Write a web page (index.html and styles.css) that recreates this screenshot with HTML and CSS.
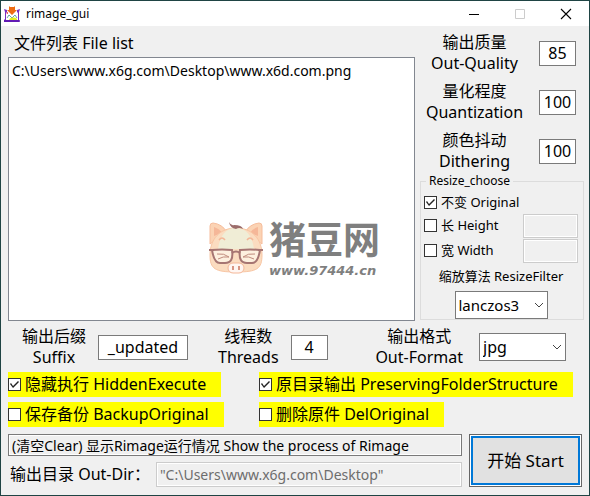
FILE: index.html
```html
<!DOCTYPE html>
<html lang="zh-CN">
<head>
<meta charset="utf-8">
<title>rimage_gui</title>
<link rel="stylesheet" href="styles.css">
</head>
<body>
<div class="window">
  <header class="titlebar">
    <svg class="app-icon" viewBox="0 0 16 16" aria-hidden="true">
      <path d="M2 4h12v11H2z" fill="#fff"/>
      <path d="M0 3l3 1v2L2 7v6h12V7l-1-1V4l3-1-1 3v10H0v-2l1-1V6z" fill="#7a2fc0"/>
      <path d="M2 7h12v7H2z" fill="#fff"/>
      <path d="M0 15h16" stroke="#5a14b0" stroke-width="1.500"/>
      <path d="M3 12l2-3 3 3 3-3 2 3" fill="none" stroke="#66a8a0"/>
      <path d="M5 14c1-3 6-3 8-1v1z" fill="#e4ef20"/>
      <path d="M2 7l2-1v2z" fill="#e8283c"/>
      <path d="M5 0l1 1h4l1-1v4h2L8 9 3 4h2z" fill="#ee6b12"/>
    </svg>
    <h1 class="title">rimage_gui</h1>
    <button class="win-btn" type="button" aria-label="Minimize"><svg viewBox="0 0 12 12"><path d="M1 6.500h10" stroke="#000"/></svg></button>
    <button class="win-btn" type="button" aria-label="Maximize" disabled><svg viewBox="0 0 12 12"><path d="M1.500 1.500h9v9h-9z" stroke="#ccc" fill="none"/></svg></button>
    <button class="win-btn" type="button" aria-label="Close"><svg viewBox="0 0 12 12"><path d="M1 1l10 10M11 1L1 11" stroke="#000" stroke-width="1.100"/></svg></button>
  </header>

  <form class="content">
    <div class="main">
      <section class="files">
        <h2 class="files-title" id="files-title">文件列表 File list</h2>
        <div class="file-list" role="listbox" aria-labelledby="files-title">
          <div class="file" role="option">C:\Users\www.x6g.com\Desktop\www.x6d.com.png</div>
          <div class="watermark">
            <svg class="pig" viewBox="0 0 54 52" aria-hidden="true">
              <path d="M1 22V4q0-3 3-3 9 1 14 9zM53 22V4q0-3-3-3-9 1-14 9z" fill="#fbd3b4" stroke="#f6bd9c"/>
              <path d="M5 14V5q6 2 8 6zM49 14V5q-6 2-8 6z" fill="#f5b798"/>
              <path d="M27 6C11 6 1 17 1 33c0 14 5 17 26 17s26-3 26-17C53 17 43 6 27 6z" fill="#fbdcc0" stroke="#f8c6a4"/>
              <path d="M27 6C16 6 11 14 9 27h36C43 14 38 6 27 6z" fill="#f0edd6"/>
              <path d="M20 0q2 4 5 3 8 0 9 4-4-2-7 0-6-1-7-7z" fill="#9c6d6b"/>
              <path d="M10 18q3-4 6 0M38 18q3-4 6 0" fill="none" stroke="#f4b798" stroke-width="1.500"/>
              <path d="M3 28q10-1 20 0 2 13-7 13h-5q-6 0-8-13zM31 28q10-1 20 0-2 13-8 13h-5q-9 0-7-13z" fill="#fdf0df" stroke="#a67572" stroke-width="2"/>
              <path d="M23 31q4-3 8 0M0 28h5M49 28h5" fill="none" stroke="#a67572" stroke-width="2"/>
              <path d="M8 32q7-1 12 3-6-1-11 2M46 32q-7-1-12 3 6-1 11 2" fill="none" stroke="#c08c7e"/>
              <rect x="19" y="41" width="16" height="10" rx="5" fill="#fff6f2" stroke="#f4b798"/>
              <path d="M24 44v4M30 44v4" stroke="#d89684" stroke-width="2"/>
            </svg>
            <div class="brand">
              <span class="brand-name">猪豆网</span>
              <span class="brand-url">www.97444.cn</span>
            </div>
          </div>
        </div>
      </section>

      <section class="settings">
        <div class="levels">
          <label for="quality">输出质量<br>Out-Quality</label><input class="num" id="quality" value="85">
          <label for="quant">量化程度<br>Quantization</label><input class="num" id="quant" value="100">
          <label for="dither">颜色抖动<br>Dithering</label><input class="num" id="dither" value="100">
        </div>
        <fieldset class="resize">
          <legend>Resize_choose</legend>
          <label class="check"><input type="checkbox" checked>不变 Original</label>
          <div class="size-row">
            <label class="check"><input type="checkbox">长 Height</label>
            <input class="size" aria-label="Height" disabled>
          </div>
          <div class="size-row">
            <label class="check"><input type="checkbox">宽 Width</label>
            <input class="size" aria-label="Width" disabled>
          </div>
          <label class="filter-label" for="filter">缩放算法 ResizeFilter</label>
          <div class="combo filter">
            <select id="filter"><option>lanczos3</option></select>
            <svg viewBox="0 0 10 6"><path d="M1 1l4 4 4-4" fill="none" stroke="#444"/></svg>
          </div>
        </fieldset>
      </section>
    </div>

    <div class="output">
      <div class="field">
        <label for="suffix">输出后缀<br>Suffix</label><input class="suffix" id="suffix" value="_updated">
      </div>
      <div class="field">
        <label for="threads">线程数<br>Threads</label><input class="num" id="threads" value="4">
      </div>
      <div class="field format-field">
        <label for="format">输出格式<br>Out-Format</label>
        <div class="combo format">
          <select id="format"><option>jpg</option></select>
          <svg viewBox="0 0 10 6"><path d="M1 1l4 4 4-4" fill="none" stroke="#444"/></svg>
        </div>
      </div>
    </div>

    <div class="options">
      <label class="check flag"><input type="checkbox" checked>隐藏执行 HiddenExecute</label>
      <label class="check flag"><input type="checkbox" checked>原目录输出 PreservingFolderStructure</label>
      <label class="check flag"><input type="checkbox">保存备份 BackupOriginal</label>
      <label class="check flag"><input type="checkbox">删除原件 DelOriginal</label>
    </div>

    <div class="bottom">
      <div class="status">
        <input class="log" aria-label="Process log" readonly value="(清空Clear) 显示Rimage运行情况 Show the process of Rimage">
        <div class="dir-row">
          <label for="dir">输出目录 Out-Dir：</label>
          <input class="dir" id="dir" disabled value="&quot;C:\Users\www.x6g.com\Desktop&quot;">
        </div>
      </div>
      <button class="start" type="button">开始 Start</button>
    </div>
  </form>
</div>
</body>
</html>
```
FILE: styles.css
```css
* { box-sizing: border-box; }

body {
  margin: 0;
  background: #f0f0f0;
  color: #000;
  font: 16px/21px "Noto Sans", "Noto Sans CJK SC", sans-serif;
}

input, select, button { font: inherit; color: inherit; margin: 0; border-radius: 0; }

.window {
  display: flex;
  flex-direction: column;
  min-height: 100vh;
  border: 1px solid #1f4444;
}

.titlebar {
  display: flex;
  align-items: center;
  height: 25px;
  padding-left: 3px;
  background: #fff;
}
.app-icon { width: 16px; height: 16px; }
.title { flex: 1; margin: 0 0 0 6px; font-size: 12px; font-weight: 400; }
.win-btn {
  display: grid;
  place-items: center;
  width: 46px;
  height: 25px;
  padding: 0;
  border: 0;
  background: none;
}
.win-btn svg { width: 12px; height: 12px; }

.content {
  flex: 1;
  display: flex;
  flex-direction: column;
  padding: 0 7px 8px;
}

.main {
  flex: 1;
  display: grid;
  grid-template-columns: 1fr 164px;
  gap: 5px;
  margin-right: -2px;
}
.files { display: flex; flex-direction: column; }
.files-title { margin: 0; padding: 7px 6px 3px; font-size: 16px; font-weight: 400; }
.file-list {
  flex: 1;
  display: flex;
  flex-direction: column;
  padding: 2px 3px;
  border: 1px solid #828790;
  background: #fff;
  font-size: 14px;
}
.watermark {
  display: flex;
  align-items: center;
  gap: 6px;
  margin: auto 31px 39px auto;
}
.pig { width: 54px; height: 52px; }
.brand { display: flex; flex-direction: column; color: #7f7f7f; font-weight: 700; }
.brand-name { font-size: 37px; line-height: 46px; font-style: oblique 5deg; }
.brand-url { font: italic 700 13px/16px "DejaVu Sans", sans-serif; }

.levels {
  display: grid;
  grid-template-columns: 1fr 37px;
  align-items: center;
  gap: 7px 10px;
  padding: 6px 8px 0 0;
  text-align: center;
}
.num, .suffix {
  width: 37px;
  height: 25px;
  padding: 0;
  border: 1px solid #7a7a7a;
  background: #fff;
  text-align: center;
}
.suffix { width: 90px; }

.resize {
  display: flex;
  flex-direction: column;
  margin: 2px 0 0;
  padding: 4px 5px 0 3px;
  border: 1px solid #dcdcdc;
  font-size: 13px;
}
.resize legend { margin-left: 2px; padding: 0 3px; font-size: 12px; line-height: 14px; }

.check { display: flex; align-items: center; gap: 4px; }
.check input {
  appearance: none;
  flex: none;
  width: 13px;
  height: 13px;
  border: 1px solid #333;
  background: #fff;
}
.check input:checked::after {
  content: "";
  display: block;
  width: 11px;
  height: 11px;
  background: #222;
  clip-path: polygon(1px 5px, 2px 4px, 4px 7px, 9px 2px, 10px 3px, 4px 9px);
}
.size-row { display: flex; justify-content: space-between; align-items: center; height: 25px; }
.size, .dir {
  height: 24px;
  padding: 0 3px;
  border: 1px solid #ccc;
  background: #f0f0f0;
  box-shadow: inset 0 0 0 1px #fff;
}
.size { width: 55px; }
.filter-label { padding: 3px 0 4px; text-align: center; }

.combo { position: relative; height: 28px; }
.combo select {
  appearance: none;
  width: 100%;
  height: 100%;
  padding: 0 3px;
  border: 1px solid #7a7a7a;
  background: #fff;
}
.combo svg {
  position: absolute;
  right: 4px;
  top: 11px;
  width: 10px;
  height: 6px;
  pointer-events: none;
}
.filter { width: 93px; align-self: center; font-size: 15px; }
.format { width: 87px; }

.output {
  display: flex;
  gap: 30px;
  padding: 5px 16px 4px 14px;
}
.field { display: flex; align-items: center; gap: 12px; text-align: center; }
.format-field { gap: 16px; margin-left: auto; }

.options {
  display: grid;
  grid-template-columns: 251px 1fr;
  justify-items: start;
  gap: 5px 0;
}
.flag { height: 25px; padding-right: 15px; background: #ff0; }

.bottom { display: flex; gap: 7px; margin-top: 7px; }
.status { flex: 1; display: flex; flex-direction: column; gap: 6px; }
.log {
  width: 100%;
  height: 22px;
  padding: 0 3px;
  border: 1px solid #7a7a7a;
  background: #f0f0f0;
  box-shadow: inset 0 0 0 1px #fff;
  font-size: 14px;
}
.dir-row { display: flex; align-items: center; gap: 6px; padding-left: 2px; }
.dir { flex: 1; min-width: 0; height: 25px; color: #6d6d6d; font-size: 14px; }
.start {
  width: 113px;
  padding: 0;
  border: 1px solid #666;
  background: #e1e1e1;
  box-shadow: inset 0 0 0 1px #fff, inset 0 0 0 3px #0078d7;
  font-size: 17px;
}
```
